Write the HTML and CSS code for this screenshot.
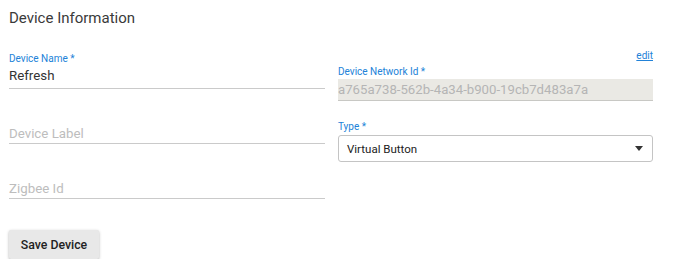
FILE: index.html
```html
<!DOCTYPE html>
<html lang="en">
<head>
    <meta charset="UTF-8">
    <meta name="viewport" content="width=device-width, initial-scale=1.0">
    <title>Device Information</title>
    <link rel="stylesheet" href="styles.css">
</head>
<body>

    <div class="page">
        <h2 class="title">Device Information</h2>

        <div class="form">
            <!-- left column -->
            <div class="col">
                <div class="field">
                    <div class="label">Device Name *</div>
                    <div class="value">Refresh</div>
                </div>
                <div class="field">
                    <div class="label"></div>
                    <div class="value empty">Device Label</div>
                </div>
                <div class="field">
                    <div class="label"></div>
                    <div class="value empty">Zigbee Id</div>
                </div>
                <button class="save-button">Save Device</button>
            </div>

            <!-- right column -->
            <div class="col">
                <div class="edit-row"><a href="#" class="edit-link">edit</a></div>
                <div class="label label-dni">Device Network Id *</div>
                <div class="value-disabled">a765a738-562b-4a34-b900-19cb7d483a7a</div>
                <div class="label label-type">Type *</div>
                <div class="select">
                    <span>Virtual Button</span>
                    <span class="select-arrow"></span>
                </div>
            </div>
        </div>
    </div>

</body>
</html>
```

FILE: styles.css
```css
/* --- Base --- */
:root {
    --accent-color: #2282d8;
    --text-color: #333;
    --line-color: #cacaca;
    --muted-color: #bdbdbd;
}

body {
    margin: 0;
    font-family: Roboto, "Liberation Sans", sans-serif;
    background-color: #fff;
    color: var(--text-color);
}

.page {
    padding: 8px 9px 0;
}

.title {
    margin: 0;
    font-size: 15px;
    font-weight: 400;
    line-height: 20px;
    color: #3a3a3a;
}

/* --- Form grid --- */
.form {
    display: grid;
    grid-template-columns: 316px 315px;
    column-gap: 13px;
    margin-top: 24px;
}

.col {
    display: flex;
    flex-direction: column;
    align-items: stretch;
}

.label {
    font-size: 10px;
    line-height: 14px;
    height: 14px;
    color: var(--accent-color);
}

/* --- Text fields --- */
.field {
    margin-bottom: 18px;
}

.value {
    height: 22px;
    line-height: 20px;
    font-size: 13.3px;
    color: #333;
    border-bottom: 1px solid var(--line-color);
}

.value.empty {
    line-height: 26px;
    color: var(--muted-color);
}

/* --- Button --- */
.save-button {
    align-self: flex-start;
    margin-top: 13px;
    width: 90px;
    height: 29px;
    padding: 0;
    border: none;
    border-radius: 2px;
    background-color: #e8e8e8;
    color: #222;
    font-family: inherit;
    font-size: 12.3px;
    font-weight: 500;
    box-shadow: 0 1px 3px rgba(0, 0, 0, 0.3);
}

/* --- Right column --- */
.edit-row {
    text-align: right;
    font-size: 10px;
    line-height: 8px;
    height: 8px;
}

.edit-link {
    color: var(--accent-color);
}

.label-dni {
    margin-top: 5px;
}

.value-disabled {
    height: 21px;
    line-height: 21px;
    font-size: 13.2px;
    color: #b5b5b5;
    background-color: #eae9e4;
    border-bottom: 1px solid #c8c8c4;
    white-space: nowrap;
    overflow: hidden;
}

.label-type {
    margin-top: 19px;
    margin-bottom: 1px;
}

.select {
    display: flex;
    justify-content: space-between;
    align-items: center;
    height: 25px;
    padding: 0 9px 0 8px;
    border: 1px solid #c4c4c4;
    border-radius: 3px;
    font-size: 11.5px;
    color: #222;
}

.select-arrow {
    width: 0;
    height: 0;
    border-left: 4px solid transparent;
    border-right: 4px solid transparent;
    border-top: 5px solid #333;
}
```
